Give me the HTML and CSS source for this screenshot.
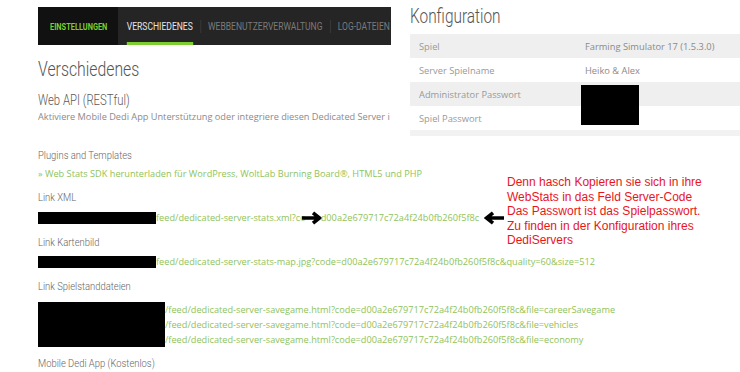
FILE: index.html
```html
<!DOCTYPE html>
<html lang="de">
<head>
<meta charset="utf-8">
<title>Verschiedenes</title>
<link rel="stylesheet" href="styles.css">
</head>
<body>
<div class="page">
  <div class="top">
    <div class="left">
      <nav class="nav">
        <div class="nav-brand"><span class="brand-text">EINSTELLUNGEN</span></div>
        <div class="nav-items">
          <span class="nav-item active">VERSCHIEDENES</span>
          <span class="nav-sep"></span>
          <span class="nav-item">WEBBENUTZERVERWALTUNG</span>
          <span class="nav-sep"></span>
          <span class="nav-item">LOG-DATEIEN</span>
        </div>
      </nav>
      <h1 class="h1">Verschiedenes</h1>
      <h2 class="h2">Web API (RESTful)</h2>
      <p class="desc">Aktiviere Mobile Dedi App Unterstützung oder integriere diesen Dedicated Server i</p>
    </div>
    <div class="right">
      <h1 class="h1 konf">Konfiguration</h1>
      <div class="table">
        <div class="row shade"><span class="label">Spiel</span><span class="value">Farming Simulator 17 (1.5.3.0)</span></div>
        <div class="row"><span class="label">Server Spielname</span><span class="value">Heiko &amp; Alex</span></div>
        <div class="row shade"><span class="label">Administrator Passwort</span><span class="value"></span></div>
        <div class="row"><span class="label">Spiel Passwort</span><span class="value"></span></div>
        <div class="row-foot"></div>
        <div class="redact pw"></div>
      </div>
    </div>
  </div>

  <div class="lower">
    <div class="label-c plugins">Plugins and Templates</div>
    <div class="green sdk">» Web Stats SDK herunterladen für WordPress, WoltLab Burning Board®, HTML5 und PHP</div>

    <div class="label-c gap10">Link XML</div>
    <div class="linkrow gap8">
      <span class="redact bar"></span>
      <span class="green">feed/dedicated-server-stats.xml?co</span>
      <svg class="arrow right-arrow" width="22" height="14" viewBox="0 0 22 14"><path d="M1 7H18M12 1.8L18.5 7L12 12.2" fill="none" stroke="#000" stroke-width="3.6" stroke-linecap="butt" stroke-linejoin="miter"/></svg>
      <span class="green">d00a2e679717c72a4f24b0fb260f5f8c</span>
      <svg class="arrow left-arrow" width="21" height="14" viewBox="0 0 21 14"><path d="M20 7H3M9 1.8L2.5 7L9 12.2" fill="none" stroke="#000" stroke-width="3.6" stroke-linecap="butt" stroke-linejoin="miter"/></svg>
    </div>

    <div class="label-c gap11">Link Kartenbild</div>
    <div class="linkrow gap7">
      <span class="redact bar"></span>
      <span class="green">feed/dedicated-server-stats-map.jpg?code=d00a2e679717c72a4f24b0fb260f5f8c&amp;quality=60&amp;size=512</span>
    </div>

    <div class="label-c gap11">Link Spielstanddateien</div>
    <div class="saverow gap9">
      <span class="redact block"></span>
      <div class="savelinks">
        <span class="green">/feed/dedicated-server-savegame.html?code=d00a2e679717c72a4f24b0fb260f5f8c&amp;file=careerSavegame</span>
        <span class="green">/feed/dedicated-server-savegame.html?code=d00a2e679717c72a4f24b0fb260f5f8c&amp;file=vehicles</span>
        <span class="green">/feed/dedicated-server-savegame.html?code=d00a2e679717c72a4f24b0fb260f5f8c&amp;file=economy</span>
      </div>
    </div>

    <div class="label-c gap9">Mobile Dedi App (Kostenlos)</div>
  </div>

  <div class="note">Denn hasch Kopieren sie sich in ihre<br>WebStats in das Feld Server-Code<br>Das Passwort ist das Spielpasswort.<br>Zu finden in der Konfiguration ihres<br>DediServers</div>
</div>
</body>
</html>
```

FILE: styles.css
```css
html, body {
  margin: 0;
  padding: 0;
  background: #fff;
}

.page {
  position: relative;
  width: 740px;
  height: 372px;
  overflow: hidden;
  font-family: "Open Sans", "DejaVu Sans", sans-serif;
}

.top {
  display: flex;
  height: 135px;
}

.left {
  margin-left: 38px;
  width: 353px;
  overflow: hidden;
  flex: none;
}

.right {
  margin-left: 19px;
  flex: 1;
}

/* nav */
.nav {
  margin-top: 7px;
  height: 38px;
  display: flex;
  background: #252525;
  font-family: Roboto, "Liberation Sans", sans-serif;
  white-space: nowrap;
  overflow: hidden;
}

.nav-brand {
  width: 80px;
  flex: none;
  background: #111;
  display: flex;
  align-items: center;
}

.brand-text {
  display: inline-block;
  margin-left: 12px;
  color: #7ccf2e;
  font-weight: bold;
  font-size: 9.5px;
  transform: scaleX(0.78);
  transform-origin: 0 50%;
}

.nav-items {
  display: flex;
  align-items: stretch;
  padding-left: 11px;
  gap: 9px;
  transform: scaleX(0.8);
  transform-origin: 0 50%;
  flex: none;
}

.nav-item {
  display: flex;
  align-items: center;
  font-size: 10.7px;
  color: #7a7a7a;
  box-sizing: border-box;
  padding-top: 1px;
}

.nav-item.active {
  color: #e6e6e6;
  border-bottom: 3px solid #7ccf2e;
  padding-top: 4px;
}

.nav-sep {
  align-self: center;
  width: 1px;
  height: 13px;
  background: #3c3c3c;
}

/* headings */
.h1 {
  margin: 13px 0 0;
  font-family: Roboto, "Liberation Sans", sans-serif;
  font-weight: 300;
  font-size: 20px;
  line-height: 22px;
  color: #555;
  transform: scaleX(0.79);
  transform-origin: 0 50%;
  white-space: nowrap;
}

.h1.konf {
  margin-top: 4px;
  line-height: 24px;
  transform: scaleX(0.77);
}

.h2 {
  margin: 11px 0 0;
  font-family: Roboto, "Liberation Sans", sans-serif;
  font-weight: 300;
  font-size: 14px;
  line-height: 18px;
  color: #5a5a5a;
  transform: scaleX(0.81);
  transform-origin: 0 50%;
  white-space: nowrap;
}

.desc {
  margin: 2px 0 0;
  font-size: 9.2px;
  line-height: 12px;
  color: #8a8a8a;
  white-space: nowrap;
}

/* config table */
.table {
  position: relative;
  margin-top: 6px;
}

.row {
  display: flex;
  height: 24px;
  align-items: center;
  font-size: 9.3px;
  color: #999;
  background: #fff;
  white-space: nowrap;
}

.row.shade {
  background: #efefef;
}

.row-foot {
  height: 6px;
  background: #f2f2f2;
}

.label {
  width: 175px;
  padding-left: 9px;
  flex: none;
  box-sizing: border-box;
}

.value {
  color: #8a8a8a;
}

.redact {
  background: #000;
  display: block;
}

.redact.pw {
  position: absolute;
  left: 171px;
  top: 51px;
  width: 58px;
  height: 40px;
}

/* lower section */
.lower {
  margin-left: 38px;
}

.label-c {
  font-family: Roboto, "Liberation Sans", sans-serif;
  font-weight: 300;
  font-size: 11.5px;
  line-height: 14px;
  color: #666;
  transform: scaleX(0.82);
  transform-origin: 0 50%;
  white-space: nowrap;
}

.plugins {
  margin-top: 13px;
}

.green {
  color: #8fc35a;
  font-size: 9.2px;
  line-height: 12px;
  white-space: nowrap;
}

.sdk {
  margin-top: 6px;
}

.gap7 { margin-top: 7px; }
.gap8 { margin-top: 8px; }
.gap9 { margin-top: 9px; }
.gap10 { margin-top: 10px; }
.gap11 { margin-top: 11px; }

.linkrow {
  display: flex;
  align-items: center;
  height: 12px;
}

.bar {
  width: 118px;
  height: 12px;
  flex: none;
}

.arrow {
  flex: none;
  display: block;
}

.right-arrow {
  margin: 0 -2px 0 -5px;
}

.left-arrow {
  margin-left: 5px;
}

.saverow {
  display: flex;
  height: 45px;
}

.block {
  width: 127px;
  height: 45px;
  flex: none;
}

.savelinks {
  display: flex;
  flex-direction: column;
  justify-content: center;
}

.savelinks .green {
  line-height: 15px;
}

.note {
  position: absolute;
  left: 507px;
  top: 175px;
  font-family: "Liberation Sans", Arial, sans-serif;
  font-size: 12px;
  line-height: 14.5px;
  color: #e8151d;
  white-space: nowrap;
}
```
